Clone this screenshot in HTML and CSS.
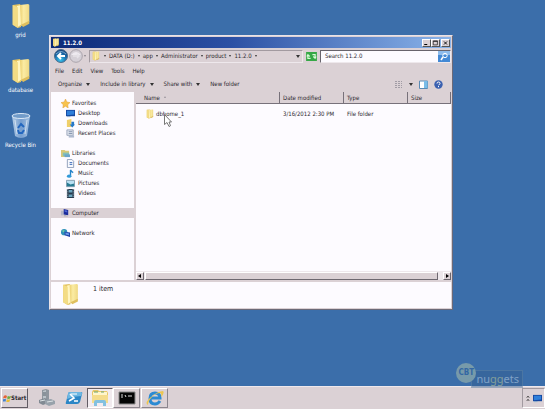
FILE: index.html
```html
<!DOCTYPE html>
<html lang="en">
<head>
  <meta charset="UTF-8">
  <title>11.2.0</title>
  <link rel="stylesheet" href="styles.css">
</head>
<body>

  <!-- shared icons -->
  <svg class="sprite" aria-hidden="true">
    <defs>
      <linearGradient id="gold" x1="0" x2="1">
        <stop offset="0" stop-color="#ecd070"/>
        <stop offset=".4" stop-color="#fbeca4"/>
        <stop offset="1" stop-color="#efd882"/>
      </linearGradient>
      <linearGradient id="glass" x1="0" x2="1">
        <stop offset="0" stop-color="#d5e5f5"/>
        <stop offset=".5" stop-color="#82a9d8"/>
        <stop offset="1" stop-color="#bed5ef"/>
      </linearGradient>
      <radialGradient id="orb" cx=".45" cy=".8" r=".8">
        <stop offset="0" stop-color="#39c5ee"/>
        <stop offset=".6" stop-color="#1768a8"/>
        <stop offset="1" stop-color="#123e78"/>
      </radialGradient>
    </defs>
    <symbol id="folder" viewBox="0 0 18 25">
      <path d="M1 2l7-1 1 2v20l-3 1-5-3z" fill="#e2c260"/>
      <path d="M5 3l4-1v19l-3 2z" fill="#fff5c0"/>
      <path d="M8 2l8-1 1 1v16l-8 4z" fill="url(#gold)"/>
      <path d="M1 2l5 2v20l-5-3z" fill="#f3dc84"/>
      <path d="M9 21l8-4v3l-6 3z" fill="#dfbf5e"/>
    </symbol>
    <symbol id="monitor" viewBox="0 0 10 10">
      <path d="M0 1h10v7H0z" fill="#1647a0"/>
      <path d="M1 2h8v4L1 7z" fill="#2f7fda"/>
      <path d="M1 8h4v1H1z" fill="#87a9c9"/>
    </symbol>
    <symbol id="computer" viewBox="0 0 10 10">
      <path d="M0 2h3v5H0z" fill="#b4b6c6"/>
      <path d="M3 0l5 1v6L3 6z" fill="#1b2c9c"/>
      <path d="M4 1l3 1v2L4 3z" fill="#5168d4"/>
      <path d="M4 7l4 1H3z" fill="#8b91a5"/>
    </symbol>
  </svg>

  <main class="desktop">
    <div class="shortcuts">
      <a href="#" class="shortcut">
        <svg class="shortcut-icon"><use href="#folder"/></svg>
        <span>grid</span>
      </a>
      <a href="#" class="shortcut">
        <svg class="shortcut-icon"><use href="#folder"/></svg>
        <span>database</span>
      </a>
      <a href="#" class="shortcut">
        <svg class="shortcut-icon" viewBox="0 0 20 26">
          <path d="M1 3l3 20q6 4 12 0l3-20z" fill="url(#glass)" opacity=".8"/>
          <ellipse cx="10" cy="3" rx="9" ry="2.500" fill="#719bc9" stroke="#dce9f6"/>
          <path d="M4 7l2 14M16 7l-2 14" stroke="#e7f1fa" opacity=".7"/>
          <path d="M7 15l3-4 3 3M13 17l-2 3H8l-1-3" fill="none" stroke="#2367bf" stroke-width="2"/>
        </svg>
        <span>Recycle Bin</span>
      </a>
    </div>

    <section class="window">
      <header class="title-bar">
        <svg class="icon-title"><use href="#folder"/></svg>
        <h1>11.2.0</h1>
        <div class="window-buttons">
          <button type="button" aria-label="Minimize"><svg viewBox="0 0 8 8"><path d="M1 6h4" stroke="#000" stroke-width="1.4"/></svg></button>
          <button type="button" aria-label="Maximize"><svg viewBox="0 0 8 8"><path d="M1 1.5h5.5v5H1z" fill="none" stroke="#222"/><path d="M1 1.5h6" stroke="#000"/></svg></button>
          <button type="button" class="close" aria-label="Close"><svg viewBox="0 0 8 8"><path d="M2 2l4 4M6 2L2 6" stroke="#000" stroke-width="1.2"/></svg></button>
        </div>
      </header>

      <div class="nav-bar">
        <button type="button" class="nav-button" aria-label="Back">
          <svg viewBox="0 0 14 14"><circle cx="7" cy="7" r="6.5" fill="url(#orb)" stroke="#4c6d8c"/><path d="M2 5q5-5 10 0" fill="none" stroke="#a8cbe2" opacity=".7"/><path d="M11 7H4M7 4L4 7l3 3" fill="none" stroke="#fff" stroke-width="2"/></svg>
        </button>
        <button type="button" class="nav-button" aria-label="Forward">
          <svg viewBox="0 0 14 14"><circle cx="7" cy="7" r="6.3" fill="#d5d0d7" stroke="#aaa4ac"/><path d="M2 6q5-6 10 0" fill="#eeeaf0"/><path d="M4 7h6M8 5l2 2-2 2" fill="none" stroke="#e6e2e8" stroke-width="1.5"/></svg>
        </button>
        <span class="arrow faint"></span>
        <nav class="address">
          <svg class="icon-address"><use href="#folder"/></svg>
          <span class="arrow"></span><a href="#">DATA (D:)</a>
          <span class="arrow"></span><a href="#">app</a>
          <span class="arrow"></span><a href="#">Administrator</a>
          <span class="arrow"></span><a href="#">product</a>
          <span class="arrow"></span><a href="#">11.2.0</a>
          <span class="arrow"></span>
          <span class="arrow big history"></span>
        </nav>
        <button type="button" class="refresh" aria-label="Refresh">
          <svg viewBox="0 0 12 10"><path d="M0 0h12v10H0z" fill="#35a846"/><path d="M5 7H2V4M1 5l1-2 2 2M7 3h3v3M8 5l2 2 1-2" fill="none" stroke="#d8fbd8" stroke-width="1.3"/></svg>
        </button>
        <div class="search">
          <input type="text" placeholder="Search 11.2.0" aria-label="Search 11.2.0">
          <button type="button" aria-label="Search">
            <svg viewBox="0 0 12 11"><path d="M0 0h12v11H0z" fill="#4389d5"/><path d="M0 0h12v4H0z" fill="#8ebcec"/><circle cx="7" cy="4.5" r="2.2" fill="none" stroke="#fff"/><path d="M5 6L3 9" stroke="#fff" stroke-width="1.5"/></svg>
          </button>
        </div>
      </div>

      <div class="menu-bar">
        <button type="button">File</button>
        <button type="button">Edit</button>
        <button type="button">View</button>
        <button type="button">Tools</button>
        <button type="button">Help</button>
      </div>

      <div class="tool-bar">
        <button type="button">Organize <span class="arrow big"></span></button>
        <button type="button">Include in library <span class="arrow big"></span></button>
        <button type="button">Share with <span class="arrow big"></span></button>
        <button type="button">New folder</button>
        <div class="view-tools">
          <button type="button" aria-label="Change view"><svg viewBox="0 0 9 9"><path d="M1 1.500h7M1 3.500h7M1 5.500h7M1 7.500h7" stroke="#a19ca5" stroke-dasharray="2 1"/></svg></button>
          <button type="button" aria-label="More views"><span class="arrow big"></span></button>
          <button type="button" aria-label="Preview pane"><svg viewBox="0 0 9 9"><path d="M.5 1h8v7.500h-8z" fill="#fff" stroke="#5a8bb5"/><path d="M5 1h3.500v7H5z" fill="#79bce8"/></svg></button>
          <button type="button" aria-label="Help"><svg viewBox="0 0 9 9"><circle cx="4.500" cy="4.500" r="4.200" fill="#3a60b0"/><path d="M3 3.500q0-1.500 1.500-1.500T6 3.500q0 1-1.500 1.500M4.500 6v1.200" fill="none" stroke="#fff"/></svg></button>
        </div>
      </div>

      <div class="content">
        <aside class="sidebar">
          <ul>
            <li><a href="#"><svg viewBox="0 0 10 10"><path d="M5 0l1.500 3.300L10 4 7.500 6.300 8 10 5 8 2 10l.5-3.700L0 4l3.500-.7z" fill="#f8c34c" stroke="#dc9a35" stroke-width=".5"/></svg>Favorites</a></li>
            <li class="child"><a href="#"><svg><use href="#monitor"/></svg>Desktop</a></li>
            <li class="child"><a href="#"><svg viewBox="0 0 10 10"><path d="M1 1l5-1v9H1z" fill="#efcf69"/><path d="M6 3h3v3h1L7 9.500 4 6h2z" fill="#2678c8"/></svg>Downloads</a></li>
            <li class="child"><a href="#"><svg viewBox="0 0 10 10"><path d="M1 1h7v6H1z" fill="#dfe4ee" stroke="#9ba5b9"/><path d="M3 3h4M3 5h4" stroke="#7f8fa9"/><path d="M3 7h6v2.500H3z" fill="#adb9ce"/></svg>Recent Places</a></li>
          </ul>
          <ul>
            <li><a href="#"><svg viewBox="0 0 10 10"><path d="M0 1h4l1 1h4v7H0z" fill="#d9c878"/><path d="M2 4h7v4H2z" fill="#83bfb8"/><path d="M4 6h6v3H4z" fill="#6aa5cb"/></svg>Libraries</a></li>
            <li class="child"><a href="#"><svg viewBox="0 0 10 10"><path d="M1.500.5h5l2 2v7h-7z" fill="#f6f8fd" stroke="#8c9cb8"/><path d="M4 4h3M4 6h3" stroke="#2f61b5"/></svg>Documents</a></li>
            <li class="child"><a href="#"><svg viewBox="0 0 10 10"><path d="M5 8V1q1 2 3 3" fill="none" stroke="#2583c8" stroke-width="1.500"/><ellipse cx="3.500" cy="8" rx="2.500" ry="1.800" fill="#2f99d8"/></svg>Music</a></li>
            <li class="child"><a href="#"><svg viewBox="0 0 10 10"><path d="M.5 1.500h9v7h-9z" fill="#b8dff2" stroke="#7c98ac"/><path d="M1 4l4 2 4-1v3H1z" fill="#267a91"/></svg>Pictures</a></li>
            <li class="child"><a href="#"><svg viewBox="0 0 10 10"><path d="M1 0h8v10H1z" fill="#25394d"/><path d="M3 1h4v3H3zM3 6h4v3H3z" fill="#6ba5be"/><path d="M2 0v10M8 0v10" stroke="#b3c3cc" stroke-dasharray="1 1"/></svg>Videos</a></li>
          </ul>
          <ul>
            <li class="selected"><a href="#"><svg><use href="#computer"/></svg>Computer</a></li>
          </ul>
          <ul>
            <li><a href="#"><svg viewBox="0 0 10 10"><circle cx="3.500" cy="3.500" r="3.500" fill="#2e91b9"/><path d="M1 2l3-1-1 3z" fill="#79cf9c"/><path d="M4 3l6 1v5L4 7z" fill="#1d3fa8"/><path d="M5 4l4 1v2L5 6z" fill="#6b9ce8"/></svg>Network</a></li>
          </ul>
        </aside>

        <div class="file-pane">
          <table class="files">
            <thead>
              <tr>
                <th class="name">Name <span class="sort"></span></th>
                <th class="date">Date modified</th>
                <th class="type">Type</th>
                <th class="size">Size</th>
              </tr>
            </thead>
            <tbody>
              <tr>
                <td class="name">
                  <a href="#"><svg><use href="#folder"/></svg>dbhome_1</a>
                  <svg class="cursor" viewBox="0 0 8 13"><path d="M.5.5v10L3 8.500 5 12.500l1.500-.8L5 8h2.500z" fill="#fff" stroke="#555" stroke-width=".8"/></svg>
                </td>
                <td>3/16/2012 2:30 PM</td>
                <td>File folder</td>
                <td></td>
              </tr>
            </tbody>
          </table>
          <div class="scroll-bar">
            <button type="button" aria-label="Scroll left"><svg viewBox="0 0 6 6"><path d="M4 1v4L1 3z"/></svg></button>
            <div class="thumb"></div>
            <button type="button" aria-label="Scroll right"><svg viewBox="0 0 6 6"><path d="M2 1v4l3-2z"/></svg></button>
          </div>
        </div>
      </div>

      <footer class="details">
        <svg class="icon-details"><use href="#folder"/></svg>
        <span>1 item</span>
      </footer>
    </section>

    <div class="watermark">
      <span class="watermark-badge">CBT</span>
      <span class="watermark-name">nu<b>gg</b>ets</span>
    </div>
  </main>

  <footer class="taskbar">
    <button type="button" class="start">
      <svg viewBox="0 0 10 10"><path d="M1 2q2-2 4 0L4 5Q2 4 0 5z" fill="#e66335"/><path d="M6 2q2 1 4 0L9 5Q7 6 5 5z" fill="#6dac3c"/><path d="M0 6q2-1 4 0L3 9Q1 8 0 9z" fill="#4281cc"/><path d="M5 6q2 1 4 0L8 9Q6 10 4 9z" fill="#e9bd35"/></svg>
      Start
    </button>
    <button type="button" class="task" aria-label="Server Manager">
      <svg viewBox="0 0 18 18"><path d="M4 1l4-1 3 1v10l-5 1-2-1z" fill="#8f969e"/><path d="M5 2l3-1v10H5z" fill="#bcc3c9"/><path d="M5 4h3M5 6h3" stroke="#59626c"/><path d="M1 11l6-2 3 2v3l-5 2-4-2z" fill="#818a93"/><path d="M7 11l6-1 4 2v3l-6 2-4-2z" fill="#98a2ab"/><path d="M2 12l5-1M9 13l6-1" stroke="#dce2e5"/></svg>
    </button>
    <button type="button" class="task" aria-label="PowerShell">
      <svg viewBox="0 0 18 18"><path d="M5 3h11q2 0 1 2l-2 8q-1 2-3 2H2q-2 0-1-2L3 5q0-2 2-2z" fill="#2b86c6"/><path d="M5 3h11q1 0 1 2l-1 2Q9 7 2 10l1-5q0-2 2-2z" fill="#6db7e2"/><path d="M5 5l4 4-5 3M9 12h4" fill="none" stroke="#fff" stroke-width="1.600"/><path d="M6 5h6" stroke="#fff"/></svg>
    </button>
    <button type="button" class="task active" aria-label="Windows Explorer">
      <svg viewBox="0 0 18 18"><path d="M1 3l1-2h5l1 1h8l1 2v10H1z" fill="#e9c868"/><path d="M2 3h14v4H2z" fill="#fff5cb"/><path d="M3 3h4M10 3h3" stroke="#6aa572"/><path d="M1 6h16v8H1z" fill="#f5dc8b"/><path d="M3 17v-4q0-2 2-2h8q2 0 2 2v4h-3v-3H6v3z" fill="#82c0e0"/></svg>
    </button>
    <button type="button" class="task running" aria-label="Command Prompt">
      <svg viewBox="0 0 18 18"><path d="M1 3h16v12H1z" fill="#050505" stroke="#888"/><path d="M3 6h2M3 8h2M7 6l1 2M10 7h4" stroke="#ddd"/></svg>
    </button>
    <button type="button" class="task running last" aria-label="Internet Explorer">
      <svg viewBox="0 0 18 18"><path d="M14 12q-2 3-5 3-5 0-5-5.500T9 4q5 0 5 5H5" fill="none" stroke="#2b8ad3" stroke-width="3"/><path d="M2 16q-4-2 3-8T17 2q2 2-2 6 1-4-1-4-4 0-8 4T2 16z" fill="#ecc650"/></svg>
    </button>
    <div class="tray">
      <svg class="tray-chevron" viewBox="0 0 5 8"><path d="M1 3l1.500-2L4 3M1 7l1.500-2L4 7" fill="none" stroke="#222"/></svg>
      <svg class="tray-screen"><use href="#monitor"/></svg>
    </div>
  </footer>

</body>
</html>
```
FILE: styles.css
```css
* {
  box-sizing: border-box;
}

html, body {
  margin: 0;
  height: 100%;
}

body {
  display: flex;
  flex-direction: column;
  overflow: hidden;
  background-color: #3b6eaa;
  color: #2b282e;
  font-family: "DejaVu Sans Condensed", "DejaVu Sans", sans-serif;
  font-size: 6px;
  line-height: 10px;
}

button, input {
  font: inherit;
  color: inherit;
  margin: 0;
  padding: 0;
  border: none;
  background: none;
}

a {
  color: inherit;
  text-decoration: none;
}

svg {
  display: block;
  flex: none;
}

.sprite {
  position: absolute;
  width: 0;
  height: 0;
}

/* desktop */
.desktop {
  position: relative;
  flex: 1;
}

.shortcuts {
  display: flex;
  flex-direction: column;
  gap: 18px;
  width: 41px;
  padding-top: 3px;
}

.shortcut {
  display: flex;
  flex-direction: column;
  align-items: center;
  gap: 1px;
  color: #fff;
  white-space: nowrap;
}

.shortcut-icon {
  width: 20px;
  height: 26px;
}

/* window */
.window {
  position: absolute;
  top: 35px;
  left: 49px;
  right: 92px;
  bottom: 76px;
  display: flex;
  flex-direction: column;
  padding: 1px;
  border: 1px solid;
  border-color: #e9e3e8 #6c6a78 #6c6a78 #e9e3e8;
  background-color: #dbd1d5;
}

.title-bar {
  display: flex;
  align-items: center;
  gap: 3px;
  height: 11px;
  padding: 0 1px;
  background: linear-gradient(to right, #0c2a78, #2c50a4 45%, #8ab4ea);
  color: #fff;
}

.title-bar h1 {
  flex: 1;
  margin: 0;
  font-size: 6px;
  font-weight: bold;
}

.icon-title {
  width: 8px;
  height: 9px;
}

.window-buttons {
  display: flex;
}

.window-buttons button {
  display: flex;
  align-items: center;
  justify-content: center;
  width: 9px;
  height: 8px;
  border: 1px solid;
  border-color: #fff #555 #555 #fff;
  background-color: #dbd1d5;
}

.window-buttons .close {
  margin-left: 1px;
}

.window-buttons svg {
  width: 7px;
  height: 6px;
}

.nav-bar {
  display: flex;
  align-items: center;
  gap: 1px;
  height: 16px;
  padding-left: 3px;
}

.nav-button svg {
  width: 14px;
  height: 14px;
}

.arrow {
  flex: none;
  display: inline-block;
  border: 1px solid transparent;
  border-top: 2px solid #333;
  border-bottom: 0;
}

.arrow.big {
  border-width: 3px 2px 0;
}

.arrow.faint {
  border-top-color: #88828a;
}

.address {
  flex: 1;
  display: flex;
  align-items: center;
  gap: 3px;
  height: 13px;
  margin-left: 2px;
  padding: 0 2px;
  border: 1px solid;
  border-color: #a29aa0 #eee8ec #eee8ec #a29aa0;
  white-space: nowrap;
}

.icon-address {
  width: 8px;
  height: 10px;
  margin-right: 1px;
}

.history {
  margin-left: auto;
}

.refresh {
  margin-left: 2px;
}

.refresh svg {
  width: 11px;
  height: 9px;
}

.search {
  display: flex;
  align-items: center;
  width: 131px;
  height: 13px;
  margin-left: 2px;
  border: 1px solid;
  border-color: #68646c #eee8ec #eee8ec #68646c;
  background-color: #fdfbff;
}

.search input {
  flex: 1;
  min-width: 0;
  height: 10px;
  padding-left: 4px;
  outline: none;
}

.search input::placeholder {
  color: #2b282e;
  opacity: 1;
}

.search svg {
  width: 12px;
  height: 11px;
}

.menu-bar {
  display: flex;
  align-items: center;
  gap: 8px;
  height: 14px;
  padding-left: 4px;
}

.tool-bar {
  display: flex;
  align-items: center;
  gap: 10px;
  height: 12px;
  margin-bottom: 2px;
  padding: 0 8px 0 7px;
}

.tool-bar button {
  display: flex;
  align-items: center;
  gap: 4px;
}

.view-tools {
  display: flex;
  align-items: center;
  gap: 6px;
  margin-left: auto;
}

.view-tools svg {
  width: 9px;
  height: 9px;
}

.content {
  flex: 1;
  display: flex;
  min-height: 0;
  background-color: #fdfbff;
}

/* sidebar */
.sidebar {
  flex: none;
  width: 85px;
  padding-top: 6px;
  border-right: 2px solid #dbd1d5;
}

.sidebar ul {
  list-style: none;
  margin: 0 0 10px;
  padding: 0;
}

.sidebar a {
  display: flex;
  align-items: center;
  gap: 2px;
  height: 10px;
  padding-left: 10px;
}

.sidebar svg {
  width: 9px;
  height: 9px;
}

.sidebar .child a {
  gap: 3px;
  padding-left: 15px;
}

.sidebar .selected {
  background-color: #dbd1d5;
}

/* file list */
.file-pane {
  flex: 1;
  display: flex;
  flex-direction: column;
  min-width: 0;
}

.files {
  width: 100%;
  table-layout: fixed;
  border-collapse: separate;
  border-spacing: 0;
}

.files th {
  height: 12px;
  padding: 0 0 0 3px;
  border-right: 1px solid #77717a;
  border-bottom: 1px solid #77717a;
  background-color: #dbd1d5;
  font-weight: normal;
  text-align: left;
}

.files th.name {
  padding-left: 8px;
}

.files .date,
.files .type {
  width: 64px;
}

.files .size {
  width: 43px;
}

.sort {
  display: inline-block;
  margin: 0 0 2px 2px;
  border: 1px solid transparent;
  border-top: 0;
  border-bottom: 2px solid #99939b;
}

.files td {
  height: 20px;
  padding: 0 0 0 3px;
  white-space: nowrap;
}

.files td.name {
  position: relative;
  padding-left: 10px;
}

.files td a {
  display: flex;
  align-items: center;
  gap: 2px;
}

.files td a svg {
  width: 8px;
  height: 10px;
}

.cursor {
  position: absolute;
  top: 10px;
  left: 28px;
  width: 8px;
  height: 13px;
}

.scroll-bar {
  display: flex;
  align-items: center;
  gap: 1px;
  height: 9px;
  margin-top: auto;
  background-color: #eee8ec;
}

.scroll-bar button,
.thumb {
  height: 8px;
  border: 1px solid;
  border-color: #fff #6e6870 #6e6870 #fff;
  background-color: #dbd1d5;
}

.scroll-bar button {
  width: 8px;
}

.scroll-bar svg {
  width: 6px;
  height: 6px;
}

.thumb {
  flex: 1;
  margin-right: 4px;
}

.details {
  display: flex;
  gap: 13px;
  padding: 1px 10px 2px;
  border-top: 2px solid #dbd1d5;
  background-color: #fdfbff;
  font-size: 7px;
}

.details span {
  padding-top: 1px;
}

.icon-details {
  width: 19px;
  height: 23px;
}

.watermark {
  position: absolute;
  right: 22px;
  bottom: -2px;
  display: flex;
  align-items: flex-end;
  opacity: 0.5;
}

.watermark-badge {
  z-index: 1;
  width: 20px;
  height: 20px;
  margin: 0 -5px 5px 0;
  border-radius: 50%;
  background-color: #b4c6aa;
  color: #2c629d;
  font-size: 8px;
  font-weight: bold;
  line-height: 20px;
  text-align: center;
}

.watermark-name {
  padding: 0 3px 0 4px;
  border: 1px solid #5c7e9e;
  background-color: #355f92;
  color: #c2d5e2;
  font-family: "Noto Sans", sans-serif;
  font-size: 11px;
  line-height: 16px;
}

.watermark-name b {
  color: #c8d08c;
  font-weight: normal;
}

/* taskbar */
.taskbar {
  display: flex;
  align-items: center;
  height: 23px;
  padding-left: 1px;
  border-top: 1px solid #eee8ec;
  background-color: #dbd1d5;
}

.start {
  display: flex;
  align-items: center;
  height: 20px;
  margin-right: 5px;
  padding: 0 1px;
  border: 1px solid;
  border-color: #fff #625c64 #625c64 #fff;
  font-weight: bold;
}

.start svg {
  width: 8px;
  height: 9px;
}

.task {
  display: flex;
  align-items: center;
  justify-content: center;
  width: 27px;
  height: 20px;
  border: 1px solid transparent;
}

.task svg {
  width: 18px;
  height: 18px;
}

.task.running {
  border-color: #fff #8b858d #8b858d #fff;
}

.task.active {
  width: 26px;
  border-color: #625c64 #fff #fff #625c64;
  background-color: #f2ebef;
}

.task.last {
  margin-left: 1px;
}

.tray {
  display: flex;
  align-items: center;
  gap: 3px;
  height: 20px;
  margin-left: auto;
  padding: 0 2px 0 3px;
  border: 1px solid;
  border-color: #a29aa0 #fff #fff #a29aa0;
}

.tray-chevron {
  width: 4px;
  height: 7px;
}

.tray-screen {
  width: 9px;
  height: 9px;
}
```
